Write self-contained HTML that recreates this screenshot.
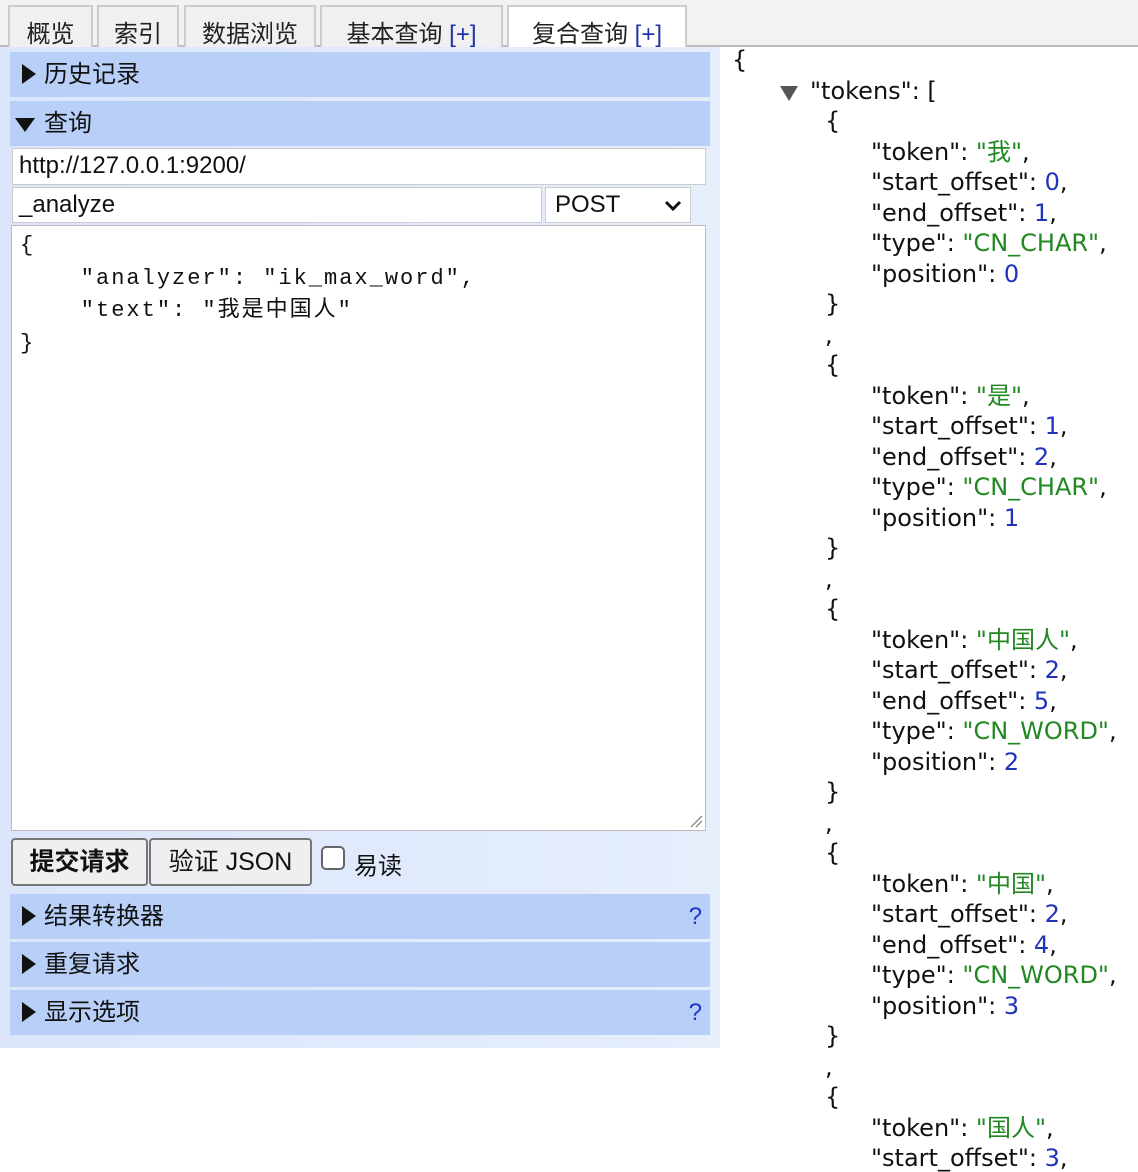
<!DOCTYPE html>
<html><head><meta charset="utf-8"><style>
*{box-sizing:border-box;margin:0;padding:0}
html,body{width:1138px;height:1172px;overflow:hidden}
body{background:#fff;font-family:"Liberation Sans","Noto Sans CJK SC",sans-serif;position:relative}
.bar{position:absolute;left:0;top:0;width:1138px;height:47px;background:#f2f2f2;border-bottom:2px solid #bbb}
.tab{position:absolute;top:5px;height:43px;background:#f0f0f0;border:2px solid #ccc;border-bottom:none;font-size:24px;text-align:center;line-height:56px;color:#222;overflow:hidden}
.tab.act{background:#fff;height:45px}
.pl{color:#2233aa}
.left{position:absolute;left:0;top:47px;width:720px;height:1001px;background:linear-gradient(90deg,#dbe6fb,#e6eefc)}
.hd{position:absolute;left:10px;width:700px;height:45px;background:#b8cff8;font-size:24px;line-height:45px;padding-left:34px;color:#111}
.hd:before{content:"";position:absolute;left:12px;top:12px;border-left:14px solid #111;border-top:10px solid transparent;border-bottom:10px solid transparent}
.hd.open:before{left:5px;top:17px;border-top:14px solid #111;border-left:10px solid transparent;border-right:10px solid transparent;border-bottom:none}
.q{position:absolute;right:8px;top:0;color:#2233cc;font-size:24px}
.inp{position:absolute;background:#fff;border:1px solid #ccc;font-size:24px;line-height:34px;padding-left:6px;color:#111}
.btn{position:absolute;top:838px;height:48px;background:#efefef;border:2px solid #777;border-radius:4px;font-size:25px;line-height:44px;text-align:center;color:#111}
pre{font-family:"Liberation Mono","Noto Sans CJK SC",monospace;font-size:22px;line-height:32.5px;letter-spacing:2px;color:#111}
.j{position:absolute;left:0;top:45px;width:1138px;height:1127px;overflow:hidden;font-family:"DejaVu Sans","Noto Sans CJK SC",sans-serif;font-size:24px;line-height:30.5px;color:#111;white-space:nowrap}
.j div{height:30.5px}
.l0{padding-left:732px}.l1{padding-left:810px}.l2{padding-left:825px}.l3{padding-left:871px}
.s{color:#228822}.n{color:#2233bb}
</style></head><body>
<div class="bar"></div>
<div class="tab" style="left:8px;width:85px">概览</div>
<div class="tab" style="left:97px;width:82px">索引</div>
<div class="tab" style="left:184px;width:132px">数据浏览</div>
<div class="tab" style="left:320px;width:183px">基本查询 <span class="pl">[+]</span></div>
<div class="tab act" style="left:507px;width:180px">复合查询 <span class="pl">[+]</span></div>
<div class="left"></div>
<div class="hd" style="top:52px">历史记录</div>
<div class="hd open" style="top:101px">查询</div>
<div class="inp" style="left:12px;top:148px;width:694px;height:37px">http://127.0.0.1:9200/</div>
<div class="inp" style="left:12px;top:187px;width:530px;height:36px">_analyze</div>
<div class="inp" style="left:545px;top:187px;width:146px;height:36px;padding-left:9px">POST<svg style="position:absolute;right:8px;top:12px" width="18" height="12"><path d="M2 2l7 7 7-7" fill="none" stroke="#111" stroke-width="3"/></svg></div>
<div class="inp" style="left:11px;top:225px;width:695px;height:606px;border-color:#bbb;padding:4px 8px">
<pre>{
    "analyzer": "ik_max_word",
    "text": "我是中国人"
}</pre>
<svg style="position:absolute;right:2px;bottom:2px" width="14" height="14"><path d="M2 13L13 2M7 13L13 7" stroke="#888" stroke-width="1.3"/></svg>
</div>
<div class="btn" style="left:11px;width:137px;font-weight:bold">提交请求</div>
<div class="btn" style="left:149px;width:163px">验证 JSON</div>
<div style="position:absolute;left:321px;top:846px;width:24px;height:24px;border:2px solid #666;border-radius:5px;background:#fff"></div>
<div style="position:absolute;left:354px;top:846px;font-size:24px;color:#111">易读</div>
<div class="hd" style="top:894px">结果转换器<span class="q">?</span></div>
<div class="hd" style="top:942px">重复请求</div>
<div class="hd" style="top:990px">显示选项<span class="q">?</span></div>
<div class="j"><div class="l0">{</div><div class="l1">"tokens": [</div><div class="l2">{</div><div class="l3">"token": <span class="s">"我"</span>,</div><div class="l3">"start_offset": <span class="n">0</span>,</div><div class="l3">"end_offset": <span class="n">1</span>,</div><div class="l3">"type": <span class="s">"CN_CHAR"</span>,</div><div class="l3">"position": <span class="n">0</span></div><div class="l2">}</div><div class="l2">,</div><div class="l2">{</div><div class="l3">"token": <span class="s">"是"</span>,</div><div class="l3">"start_offset": <span class="n">1</span>,</div><div class="l3">"end_offset": <span class="n">2</span>,</div><div class="l3">"type": <span class="s">"CN_CHAR"</span>,</div><div class="l3">"position": <span class="n">1</span></div><div class="l2">}</div><div class="l2">,</div><div class="l2">{</div><div class="l3">"token": <span class="s">"中国人"</span>,</div><div class="l3">"start_offset": <span class="n">2</span>,</div><div class="l3">"end_offset": <span class="n">5</span>,</div><div class="l3">"type": <span class="s">"CN_WORD"</span>,</div><div class="l3">"position": <span class="n">2</span></div><div class="l2">}</div><div class="l2">,</div><div class="l2">{</div><div class="l3">"token": <span class="s">"中国"</span>,</div><div class="l3">"start_offset": <span class="n">2</span>,</div><div class="l3">"end_offset": <span class="n">4</span>,</div><div class="l3">"type": <span class="s">"CN_WORD"</span>,</div><div class="l3">"position": <span class="n">3</span></div><div class="l2">}</div><div class="l2">,</div><div class="l2">{</div><div class="l3">"token": <span class="s">"国人"</span>,</div><div class="l3">"start_offset": <span class="n">3</span>,</div></div>
<svg style="position:absolute;left:779px;top:84px" width="20" height="18"><path d="M1 2h18L10 17z" fill="#555"/></svg>
</body></html>
